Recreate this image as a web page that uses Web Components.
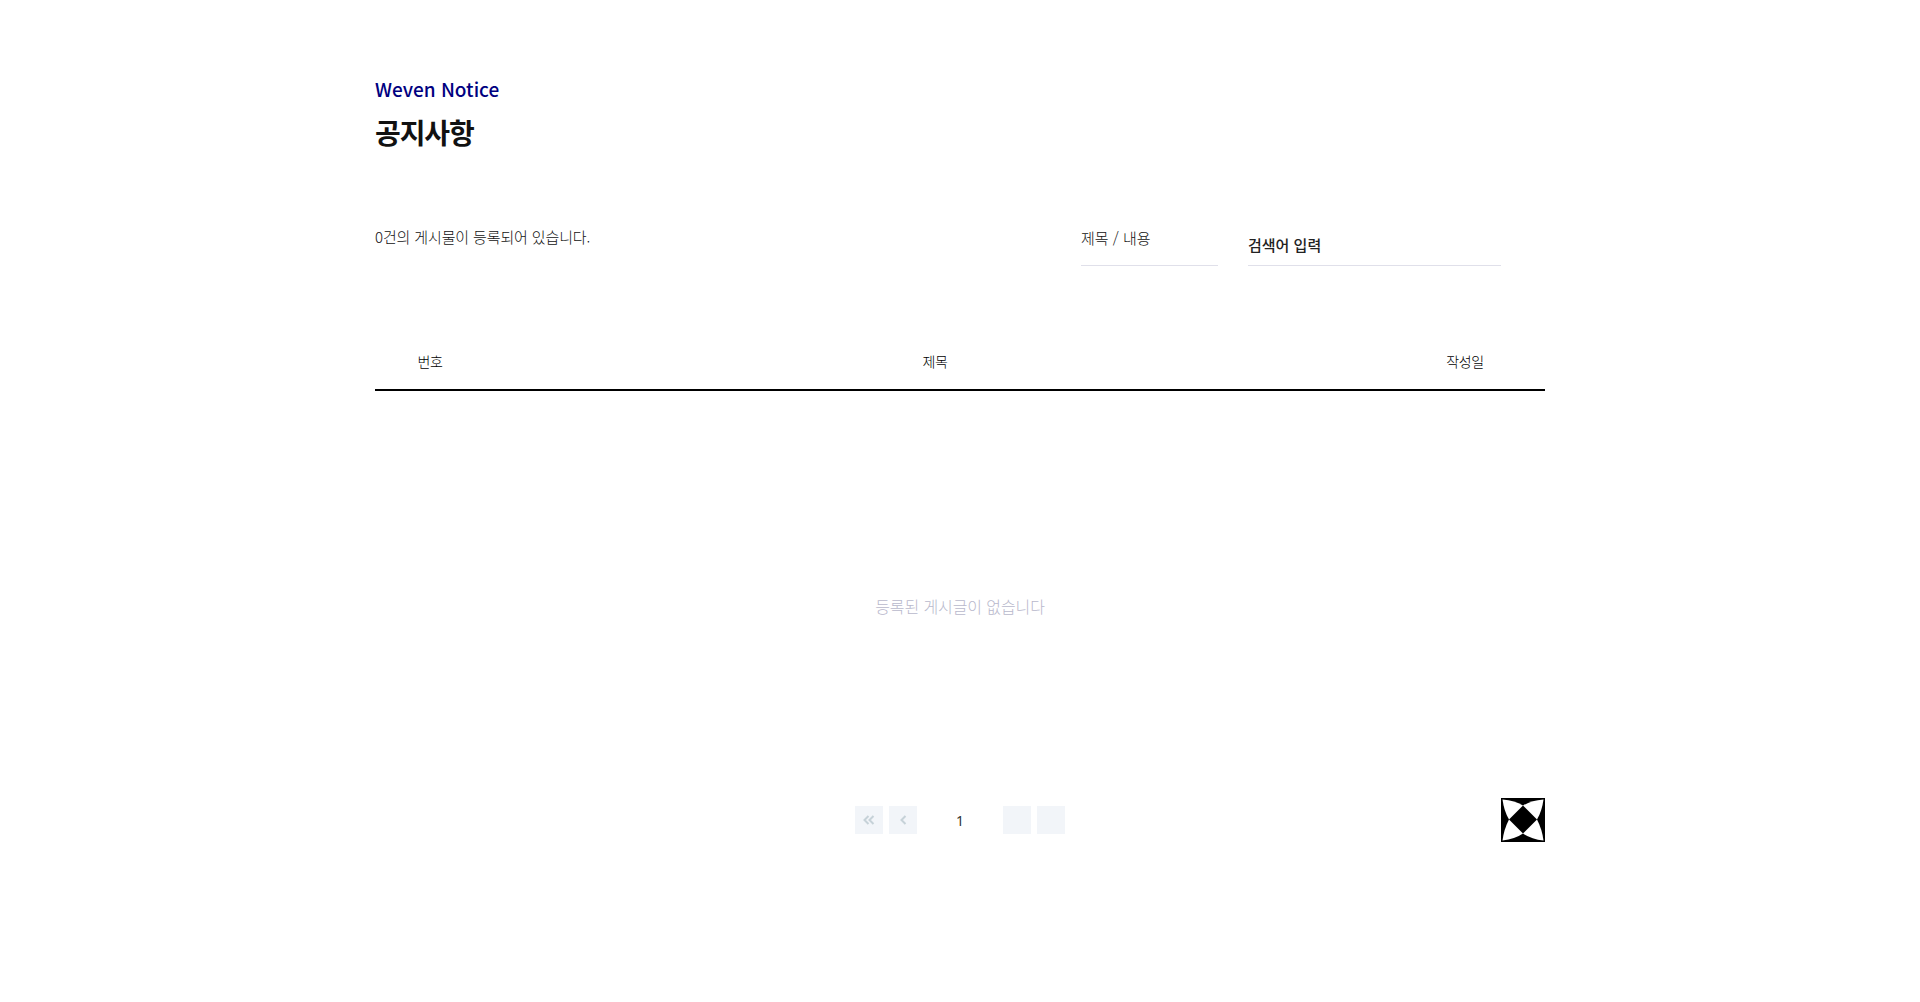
<!DOCTYPE html>
<html lang="ko">
<head>
<meta charset="utf-8">
<title>공지사항</title>
<style>
html,body{margin:0;padding:0;background:#fff;}
body{font-family:"Noto Sans CJK KR","Noto Sans",sans-serif;color:#000;}
</style>
</head>
<body>
<notice-page>
  <notice-title slot="title" en="Weven Notice" ko="공지사항"></notice-title>
  <notice-search slot="search" count="0"></notice-search>
  <notice-table slot="table" empty="등록된 게시글이 없습니다"></notice-table>
  <notice-pager slot="pager"></notice-pager>
  <weven-logo slot="logo"></weven-logo>
</notice-page>
<script>
class NoticePage extends HTMLElement{
  constructor(){
    super();
    this.attachShadow({mode:'open'}).innerHTML=`
<style>
:host{display:block;width:1170px;height:1002px;margin:0 auto;box-sizing:border-box;padding-top:76px;}
.foot{display:grid;grid-template-columns:44px 1fr 44px;align-items:center;}
.foot .mid{grid-column:2;display:flex;justify-content:center;}
.foot .end{grid-column:3;display:flex;}
</style>
<slot name="title"></slot>
<slot name="search"></slot>
<slot name="table"></slot>
<div class="foot">
  <div class="mid"><slot name="pager"></slot></div>
  <div class="end"><slot name="logo"></slot></div>
</div>`
  }
}
class NoticeTitle extends HTMLElement{
  constructor(){
    super();
    this.attachShadow({mode:'open'}).innerHTML=`
<style>
:host{display:block;height:146px;}
.en{font-size:19px;line-height:26px;font-weight:500;color:#000080;}
h1{margin:10px 0 0;font-size:28px;line-height:40px;font-weight:700;letter-spacing:-1.1px;color:#111;}
</style>
<div class="en">${this.getAttribute('en')}</div>
<h1>${this.getAttribute('ko')}</h1>`
  }
}
class NoticeSearch extends HTMLElement{
  constructor(){
    super();
    this.attachShadow({mode:'open'}).innerHTML=`
<style>
:host{display:flex;height:44px;font-size:15px;letter-spacing:-.13px;color:#111;}
.count{flex:1;line-height:30px;font-weight:300;}
.sel{width:137px;height:44px;box-sizing:border-box;border-bottom:1px solid #e0e0ea;line-height:31px;font-size:15px;letter-spacing:0;font-weight:300;}
.inp{width:253px;height:44px;box-sizing:border-box;margin:0 44px 0 30px;border-bottom:1px solid #e0e0ea;line-height:46px;font-size:15px;letter-spacing:0;font-weight:500;color:#222;}
</style>
<div class="count">${this.getAttribute('count')}건의 게시물이 등록되어 있습니다.</div>
<div class="sel">제목 / 내용</div>
<div class="inp">검색어 입력</div>`
  }
}
class NoticeTable extends HTMLElement{
  constructor(){
    super();
    this.attachShadow({mode:'open'}).innerHTML=`
<style>
:host{display:block;margin-top:63px;}
.head{display:grid;grid-template-columns:110px 900px 160px;height:60px;border-bottom:2px solid #000;font-size:14px;font-weight:300;letter-spacing:-.3px;line-height:65px;text-align:center;color:#000;}
.empty{height:384px;padding-top:23px;display:flex;align-items:center;justify-content:center;font-size:16px;font-weight:300;letter-spacing:-.1px;color:#b8b8cc;}
</style>
<div class="head"><div>번호</div><div>제목</div><div>작성일</div></div>
<div class="empty">${this.getAttribute('empty')}</div>`
  }
}
class NoticePager extends HTMLElement{
  constructor(){
    super();
    this.attachShadow({mode:'open'}).innerHTML=`
<style>
:host{display:flex;align-items:center;gap:6px;}
.b{width:28px;height:28px;background:#f2f5f9;display:flex;align-items:center;justify-content:center;}
svg{display:block;}
.n{width:74px;text-align:center;font-size:14px;color:#333;font-family:"Noto Sans","Noto Sans CJK KR",sans-serif;line-height:30px;height:28px;}
</style>
<div class="b"><svg width="12" height="10" viewBox="0 0 12 10" fill="none" stroke="#c6d2d8" stroke-width="2"><path d="M5.5 1 1.5 5l4 4M10.5 1l-4 4 4 4"/></svg></div>
<div class="b"><svg width="7" height="10" viewBox="0 0 7 10" fill="none" stroke="#c6d2d8" stroke-width="2"><path d="M5.5 1 1.5 5l4 4"/></svg></div>
<div class="n">1</div>
<div class="b"></div>
<div class="b"></div>`
  }
}
class WevenLogo extends HTMLElement{
  constructor(){
    super();
    this.attachShadow({mode:'open'}).innerHTML=`
<style>
:host{display:block;width:44px;height:44px;}
svg{display:block;}
</style>
<svg width="44" height="44" viewBox="0 0 44 44">
<rect width="44" height="44" fill="#000"/>
<path fill="#fff" d="M1.5 1.5Q14 2.5 22 7.5L8 21.5Q3 13 1.5 1.5Z"/>
<path fill="#fff" d="M42.5 1.5Q30 2.5 22 7.5L36 21.5Q41 13 42.5 1.5Z"/>
<path fill="#fff" d="M1.5 42.5Q3 31 8 21.5L22 35.5Q14 41 1.5 42.5Z"/>
<path fill="#fff" d="M42.5 42.5Q41 31 36 21.5L22 35.5Q30 41 42.5 42.5Z"/>
</svg>`
  }
}
customElements.define('notice-page',NoticePage)
customElements.define('notice-title',NoticeTitle)
customElements.define('notice-search',NoticeSearch)
customElements.define('notice-table',NoticeTable)
customElements.define('notice-pager',NoticePager)
customElements.define('weven-logo',WevenLogo)
</script>
</body>
</html>
